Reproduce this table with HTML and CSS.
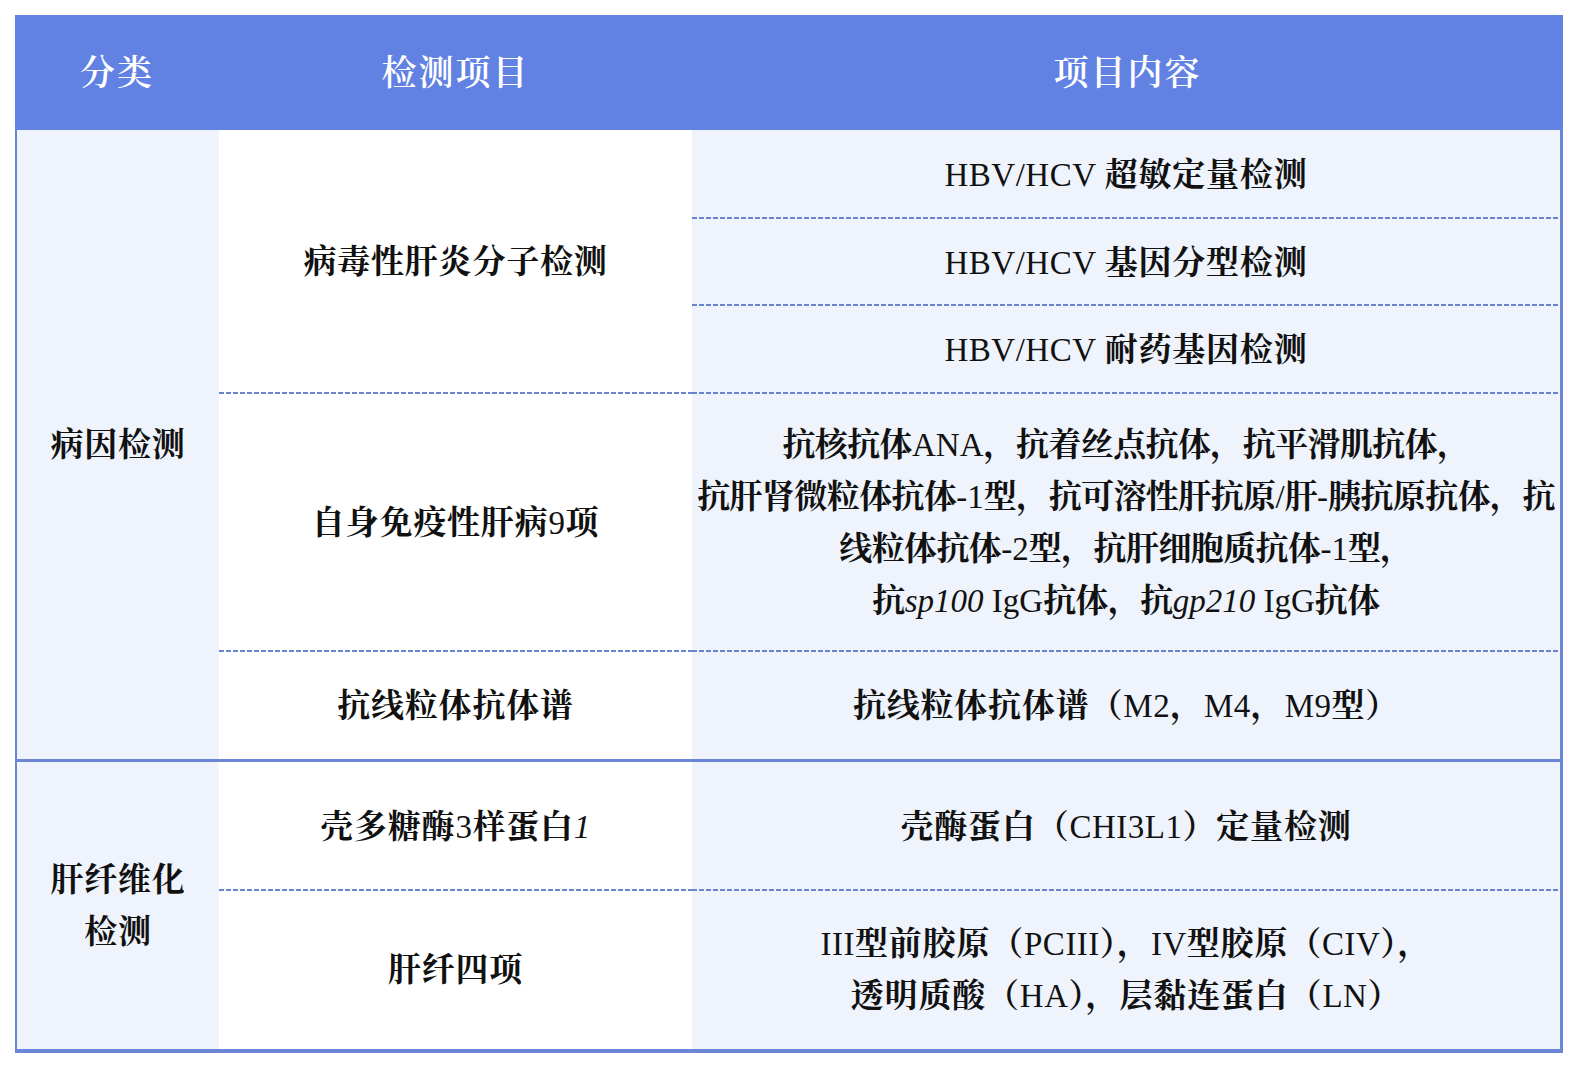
FILE: index.html
```html
<!DOCTYPE html>
<html lang="zh-CN">
<head>
<meta charset="utf-8">
<title>检测项目</title>
<link rel="stylesheet" href="styles.css">
</head>
<body>
<div class="table">
  <div class="head">
    <div class="hcell">分类</div>
    <div class="hcell">检测项目</div>
    <div class="hcell">项目内容</div>
  </div>
  <div class="group group1">
    <div class="cell light span5"><div class="txt">病因检测</div></div>
    <div class="cell white span3 dash"><div class="txt">病毒性肝炎分子检测</div></div>
    <div class="cell light dash"><div class="txt"><span class="en">HBV/HCV </span>超敏定量检测</div></div>
    <div class="cell light dash"><div class="txt"><span class="en">HBV/HCV </span>基因分型检测</div></div>
    <div class="cell light dash"><div class="txt"><span class="en">HBV/HCV </span>耐药基因检测</div></div>
    <div class="cell white dash"><div class="txt">自身免疫性肝病<span class="en">9</span>项</div></div>
    <div class="cell light dash"><div class="txt tight">抗核抗体<span class="en">ANA</span>，抗着丝点抗体，抗平滑肌抗体，<br>抗肝肾微粒体抗体<span class="en">-1</span>型，抗可溶性肝抗原<span class="en">/</span>肝<span class="en">-</span>胰抗原抗体，抗<br>线粒体抗体<span class="en">-2</span>型，抗肝细胞质抗体<span class="en">-1</span>型，<br>抗<i class="en">sp100</i><span class="en"> IgG</span>抗体，抗<i class="en">gp210</i><span class="en"> IgG</span>抗体</div></div>
    <div class="cell white"><div class="txt">抗线粒体抗体谱</div></div>
    <div class="cell light"><div class="txt">抗线粒体抗体谱（<span class="en">M2</span>，<span class="en">M4</span>，<span class="en">M9</span>型）</div></div>
  </div>
  <div class="group group2">
    <div class="cell light span2"><div class="txt">肝纤维化<br>检测</div></div>
    <div class="cell white dash"><div class="txt">壳多糖酶<span class="en">3</span>样蛋白<i class="en">1</i></div></div>
    <div class="cell light dash"><div class="txt">壳酶蛋白（<span class="en">CHI3L1</span>）定量检测</div></div>
    <div class="cell white"><div class="txt">肝纤四项</div></div>
    <div class="cell light"><div class="txt"><span class="en">III</span>型前胶原（<span class="en">PCIII</span>），<span class="en">IV</span>型胶原（<span class="en">CIV</span>），<br>透明质酸（<span class="en">HA</span>），层黏连蛋白（<span class="en">LN</span>）</div></div>
  </div>
</div>
</body>
</html>
```

FILE: styles.css
```css
body {
  margin: 0;
  background: #ffffff;
  font-family: "Liberation Serif", "Noto Serif CJK SC", "Noto Sans CJK SC", serif;
}

.table {
  margin: 15px 0 0 15px;
  width: 1548px;
}

.head {
  display: grid;
  grid-template-columns: 204px 473px 871px;
  height: 115px;
  background: #6282e3;
  color: #ffffff;
  font-size: 35px;
  font-weight: 600;
  letter-spacing: 2px;
}

.hcell {
  display: flex;
  align-items: center;
  justify-content: center;
  padding-bottom: 5px;
}

.group {
  display: grid;
  grid-template-columns: 202px 473px 868px;
  border-left: 2px solid #6b86d6;
  border-right: 3px solid #6b86d6;
  border-bottom: 3px solid #6b86d6;
}

.group1 {
  grid-template-rows: 89px 87px 88px 258px 107px;
}

.group2 {
  grid-template-rows: 129px 158px;
  border-bottom-width: 4px;
}

.cell {
  display: flex;
  align-items: center;
  justify-content: center;
  text-align: center;
  font-size: 33px;
  font-weight: 700;
  letter-spacing: 0.8px;
  line-height: 52px;
  color: #111111;
  white-space: nowrap;
}

.txt {
  text-align: center;
}

.en {
  font-weight: 400;
  letter-spacing: 0.5px;
}

.tight {
  letter-spacing: -0.6px;
}

.tight .en {
  letter-spacing: 0;
}

.light {
  background-color: #eff3fc;
}

.white {
  background-color: #ffffff;
}

.dash {
  background-image: repeating-linear-gradient(to right, #6b84cf 0 5px, transparent 5px 7px);
  background-size: 100% 2px;
  background-position: left bottom;
  background-repeat: no-repeat;
}

.span5 {
  grid-row: span 5;
}

.span3 {
  grid-row: span 3;
}

.span2 {
  grid-row: span 2;
}
```
